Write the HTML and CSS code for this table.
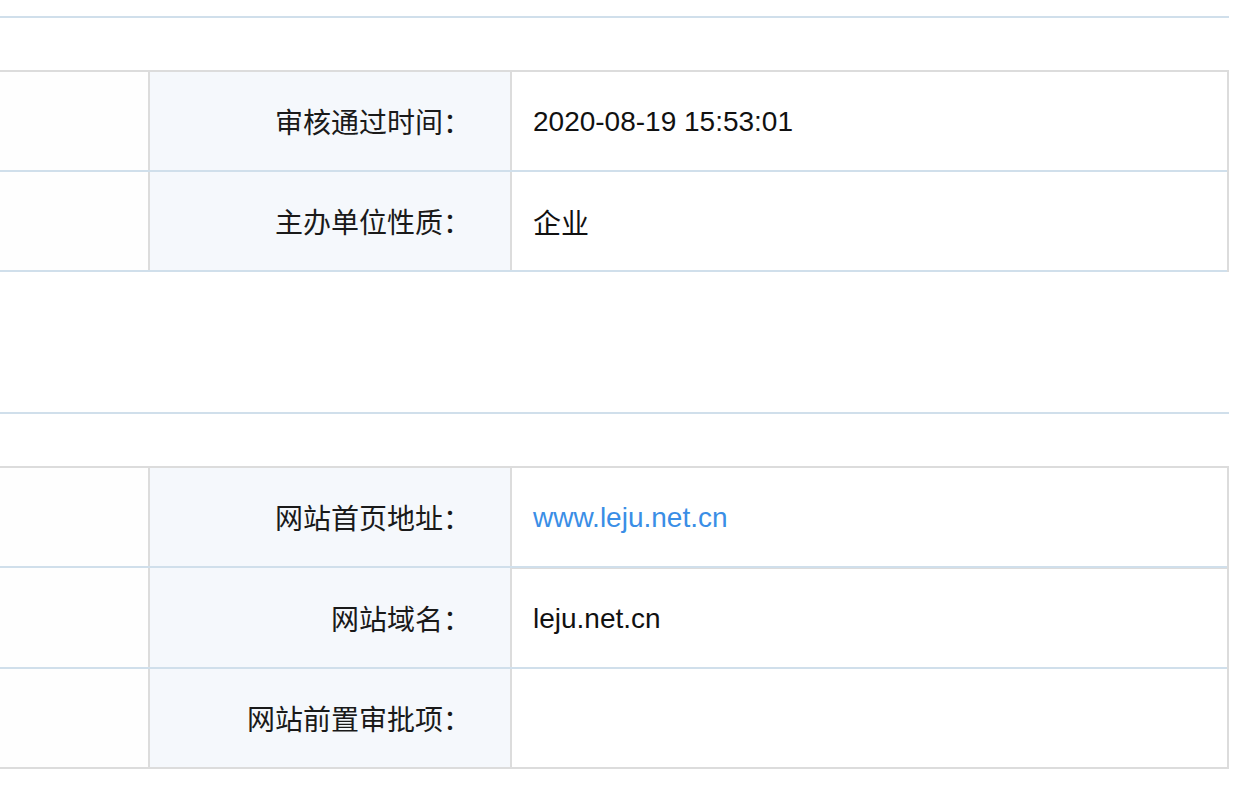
FILE: index.html
```html
<!DOCTYPE html>
<html lang="zh-CN">
<head>
<meta charset="utf-8">
<title>备案信息</title>
<link rel="stylesheet" href="styles.css">
</head>
<body>
<div class="page">
  <section class="block">
    <div class="block-head"></div>
    <div class="info">
      <div class="row">
        <div class="cell side"></div>
        <div class="cell label">审核通过时间：</div>
        <div class="cell value">2020-08-19 15:53:01</div>
      </div>
      <div class="row">
        <div class="cell side"></div>
        <div class="cell label">主办单位性质：</div>
        <div class="cell value">企业</div>
      </div>
    </div>
  </section>
  <section class="block block-second">
    <div class="block-head"></div>
    <div class="info">
      <div class="row">
        <div class="cell side"></div>
        <div class="cell label">网站首页地址：</div>
        <div class="cell value"><a class="link" href="#">www.leju.net.cn</a></div>
      </div>
      <div class="row row-domain">
        <div class="cell side"></div>
        <div class="cell label">网站域名：</div>
        <div class="cell value value-domain">leju.net.cn</div>
      </div>
      <div class="row">
        <div class="cell side"></div>
        <div class="cell label">网站前置审批项：</div>
        <div class="cell value"></div>
      </div>
    </div>
  </section>
</div>
</body>
</html>
```

FILE: styles.css
```css
html, body {
  margin: 0;
  padding: 0;
  background: #ffffff;
}

body {
  font-family: "Liberation Sans", "Noto Sans CJK SC", sans-serif;
  font-size: 28px;
  color: #111111;
}

.page {
  width: 1229px;
}

.block-head {
  height: 16px;
  border-bottom: 2px solid #d0dfeb;
}

.block-second {
  margin-top: 124px;
}

.info {
  margin-top: 52px;
  border-top: 2px solid #dcdcdc;
  border-right: 2px solid #dcdcdc;
}

.row {
  display: flex;
  height: 98px;
  border-bottom: 2px solid #d0dfeb;
}

.block-second .info .row:last-child {
  border-bottom-color: #dcdcdc;
}

.cell {
  display: flex;
  align-items: center;
}

.side {
  width: 148px;
  background: #fefefe;
}

.label {
  box-sizing: border-box;
  width: 362px;
  justify-content: flex-end;
  padding-right: 39px;
  border-left: 2px solid #dcdcdc;
  background: #f5f8fc;
  color: #1a1a1a;
  font-family: "Noto Sans CJK SC", sans-serif;
  font-size: 28px;
}

.value {
  flex: 1;
  padding-left: 21px;
  padding-top: 2px;
  border-left: 2px solid #dcdcdc;
  color: #111111;
}

.link {
  color: #3a8ee6;
  text-decoration: none;
}

.row-domain {
  height: 99px;
}

.value-domain {
  border-top: 1px solid #dcdcdc;
}
```
